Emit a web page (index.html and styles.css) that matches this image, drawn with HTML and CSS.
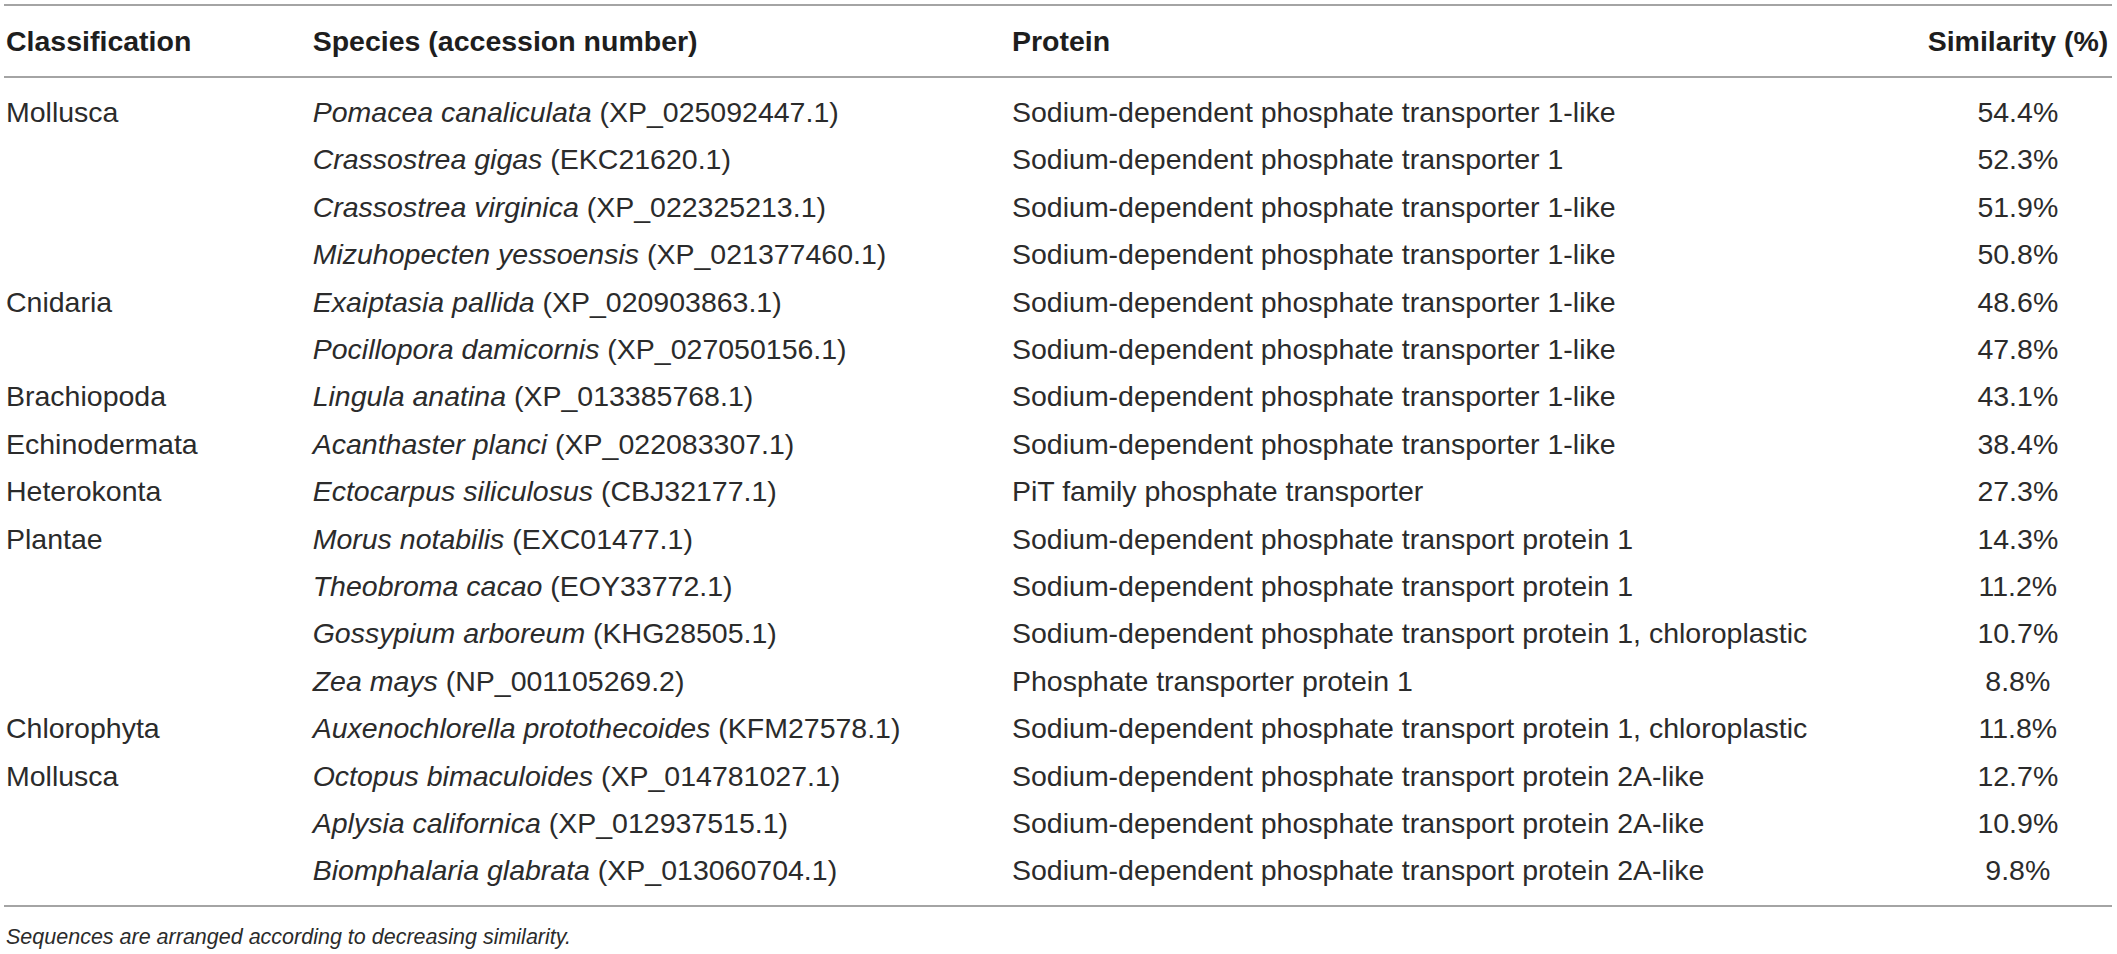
FILE: index.html
```html
<!DOCTYPE html>
<html>
<head>
<meta charset="utf-8">
<link rel="stylesheet" href="styles.css">
</head>
<body>
<div class="wrap">
<table class="tbl">
  <colgroup>
    <col class="c1"><col class="c2"><col class="c3"><col class="c4">
  </colgroup>
  <thead>
    <tr><th class="first">Classification</th><th>Species (accession number)</th><th>Protein</th><th class="num">Similarity (%)</th></tr>
  </thead>
  <tbody>
    <tr class="top"><td class="first">Mollusca</td><td><i>Pomacea canaliculata</i> (XP_025092447.1)</td><td>Sodium-dependent phosphate transporter 1-like</td><td class="num">54.4%</td></tr>
    <tr><td class="first"></td><td><i>Crassostrea gigas</i> (EKC21620.1)</td><td>Sodium-dependent phosphate transporter 1</td><td class="num">52.3%</td></tr>
    <tr><td class="first"></td><td><i>Crassostrea virginica</i> (XP_022325213.1)</td><td>Sodium-dependent phosphate transporter 1-like</td><td class="num">51.9%</td></tr>
    <tr><td class="first"></td><td><i>Mizuhopecten yessoensis</i> (XP_021377460.1)</td><td>Sodium-dependent phosphate transporter 1-like</td><td class="num">50.8%</td></tr>
    <tr><td class="first">Cnidaria</td><td><i>Exaiptasia pallida</i> (XP_020903863.1)</td><td>Sodium-dependent phosphate transporter 1-like</td><td class="num">48.6%</td></tr>
    <tr><td class="first"></td><td><i>Pocillopora damicornis</i> (XP_027050156.1)</td><td>Sodium-dependent phosphate transporter 1-like</td><td class="num">47.8%</td></tr>
    <tr><td class="first">Brachiopoda</td><td><i>Lingula anatina</i> (XP_013385768.1)</td><td>Sodium-dependent phosphate transporter 1-like</td><td class="num">43.1%</td></tr>
    <tr><td class="first">Echinodermata</td><td><i>Acanthaster planci</i> (XP_022083307.1)</td><td>Sodium-dependent phosphate transporter 1-like</td><td class="num">38.4%</td></tr>
    <tr><td class="first">Heterokonta</td><td><i>Ectocarpus siliculosus</i> (CBJ32177.1)</td><td>PiT family phosphate transporter</td><td class="num">27.3%</td></tr>
    <tr><td class="first">Plantae</td><td><i>Morus notabilis</i> (EXC01477.1)</td><td>Sodium-dependent phosphate transport protein 1</td><td class="num">14.3%</td></tr>
    <tr><td class="first"></td><td><i>Theobroma cacao</i> (EOY33772.1)</td><td>Sodium-dependent phosphate transport protein 1</td><td class="num">11.2%</td></tr>
    <tr><td class="first"></td><td><i>Gossypium arboreum</i> (KHG28505.1)</td><td>Sodium-dependent phosphate transport protein 1, chloroplastic</td><td class="num">10.7%</td></tr>
    <tr><td class="first"></td><td><i>Zea mays</i> (NP_001105269.2)</td><td>Phosphate transporter protein 1</td><td class="num">8.8%</td></tr>
    <tr><td class="first">Chlorophyta</td><td><i>Auxenochlorella protothecoides</i> (KFM27578.1)</td><td>Sodium-dependent phosphate transport protein 1, chloroplastic</td><td class="num">11.8%</td></tr>
    <tr><td class="first">Mollusca</td><td><i>Octopus bimaculoides</i> (XP_014781027.1)</td><td>Sodium-dependent phosphate transport protein 2A-like</td><td class="num">12.7%</td></tr>
    <tr><td class="first"></td><td><i>Aplysia californica</i> (XP_012937515.1)</td><td>Sodium-dependent phosphate transport protein 2A-like</td><td class="num">10.9%</td></tr>
    <tr class="last"><td class="first"></td><td><i>Biomphalaria glabrata</i> (XP_013060704.1)</td><td>Sodium-dependent phosphate transport protein 2A-like</td><td class="num">9.8%</td></tr>
  </tbody>
</table>
<p class="note">Sequences are arranged according to decreasing similarity.</p>
</div>
</body>
</html>
```

FILE: styles.css
```css
html, body {
  margin: 0;
  padding: 0;
  background: #ffffff;
}

body {
  font-family: "Liberation Sans", Arial, Helvetica, sans-serif;
  color: #2b2b2b;
}

.wrap {
  padding: 4px 5px 0 4px;
}

.tbl {
  width: 2108px;
  border-collapse: collapse;
  table-layout: fixed;
  font-size: 28.5px;
  line-height: 47.4px;
}

.c1 { width: 308.7px; }
.c2 { width: 699.3px; }
.c3 { width: 915.7px; }
.c4 { width: 184.3px; }

.tbl th,
.tbl td {
  padding: 0;
  text-align: left;
  white-space: nowrap;
  vertical-align: top;
}

.tbl th {
  font-weight: bold;
  color: #1e1e1e;
  padding-top: 12.4px;
  padding-bottom: 10.2px;
}

.tbl thead tr {
  border-top: 2px solid #a4a4a4;
  border-bottom: 2px solid #a4a4a4;
}

.tbl .first {
  padding-left: 2px;
}

.tbl th.num {
  text-align: right;
  padding-right: 4px;
}

.tbl td.num {
  text-align: center;
  padding-right: 4px;
}

.tbl td i {
  font-style: italic;
}

.tbl tr.top td {
  padding-top: 11px;
}

.tbl tr.last td {
  padding-bottom: 10.5px;
}

.tbl tbody {
  border-bottom: 2px solid #a4a4a4;
}

.note {
  margin: 0;
  padding-left: 2px;
  font-size: 21.5px;
  font-style: italic;
  line-height: 30px;
  padding-top: 15px;
}
```
